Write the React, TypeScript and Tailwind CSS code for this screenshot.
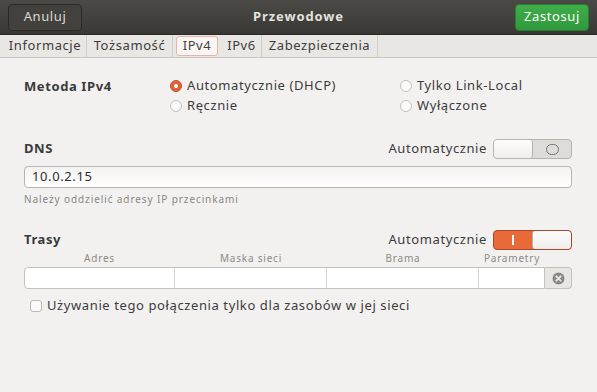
import React from "react";

function Radio({ checked, label }: { checked?: boolean; label: string }) {
  return (
    <div className="flex items-center h-[20px]">
      {checked ? (
        <span className="w-[12px] h-[12px] rounded-full bg-[#e0643a] border border-[#c4522c] flex items-center justify-center mr-[5px]">
          <span className="w-[4px] h-[4px] rounded-full bg-white" />
        </span>
      ) : (
        <span className="w-[12px] h-[12px] rounded-full bg-[#fafafa] border border-[#c2bfba] mr-[5px]" />
      )}
      <span className="text-[#3c3c3c]">{label}</span>
    </div>
  );
}

function SwitchOff() {
  return (
    <div className="w-[79px] h-[20px] rounded-[4px] border border-[#b6b3ad] bg-[#dedcd8] flex overflow-hidden">
      <div className="w-[39px] h-full bg-gradient-to-b from-[#fdfdfc] to-[#efeeec] border-r border-[#b6b3ad] rounded-[3px]" />
      <div className="flex-1 flex items-center justify-center">
        <span className="w-[13px] h-[11px] rounded-full border border-[#77746e]" />
      </div>
    </div>
  );
}

function SwitchOn() {
  return (
    <div className="w-[79px] h-[20px] rounded-[4px] border border-[#a8472a] bg-[#e96a39] flex overflow-hidden">
      <div className="flex-1 flex items-center justify-center">
        <span className="w-[2px] h-[10px] bg-white" />
      </div>
      <div className="w-[39px] h-full bg-gradient-to-b from-[#fdfdfc] to-[#efeeec] border-l border-[#b6b3ad] rounded-[3px]" />
    </div>
  );
}

export default function App() {
  return (
    <div
      className="w-[597px] h-[392px] bg-[#f2f1f0] flex flex-col text-[13px] text-[#3c3c3c] tracking-[0.6px]"
      style={{ fontFamily: '"Noto Sans", "Open Sans", sans-serif' }}
    >
      {/* Header */}
      <div className="h-[35px] bg-gradient-to-b from-[#4b4a46] to-[#393834] border-b border-[#2a2927] flex items-center justify-between px-[8px]">
        <button className="w-[74px] h-[27px] rounded-[4px] border border-[#2b2a27] bg-[#42413d] text-[#dcd9d2] text-[13px] tracking-[0.6px]">
          Anuluj
        </button>
        <div className="text-[#e4e2dd] font-bold text-[13px] tracking-[0.9px]">Przewodowe</div>
        <button className="w-[74px] h-[27px] rounded-[4px] border border-[#23812f] bg-gradient-to-b from-[#41ac4b] to-[#2f9a3b] text-white text-[13px] tracking-[0.6px]">
          Zastosuj
        </button>
      </div>

      {/* Tabs */}
      <div className="h-[23px] bg-[#e9e7e4] border-b border-[#c9c6c1] flex items-stretch pl-[4px] text-[13px]">
        <div className="w-[83px] flex items-center justify-center border-r border-[#d2cfca]">Informacje</div>
        <div className="w-[86px] flex items-center justify-center border-r border-[#d2cfca]">Tożsamość</div>
        <div className="w-[42px] ml-[3px] mr-[4px] my-[1px] flex items-center justify-center rounded-[3px] border border-[#eab3a3] bg-[#f8f7f6] text-[#4a3f3b]">IPv4</div>
        <div className="w-[40px] flex items-center justify-center border-r border-[#d2cfca]">IPv6</div>
        <div className="w-[116px] flex items-center justify-center border-r border-[#d2cfca]">Zabezpieczenia</div>
      </div>

      {/* Content */}
      <div className="flex flex-col px-[24px] pr-[25px]">
        {/* Method */}
        <div className="flex mt-[18px]">
          <div className="w-[146px] pt-[1px] font-bold text-[#3a3a3a]">Metoda IPv4</div>
          <div className="w-[230px] flex flex-col">
            <Radio checked label="Automatycznie (DHCP)" />
            <Radio label="Ręcznie" />
          </div>
          <div className="flex flex-col">
            <Radio label="Tylko Link-Local" />
            <Radio label="Wyłączone" />
          </div>
        </div>

        {/* DNS */}
        <div className="flex items-center justify-between mt-[23px] h-[20px]">
          <div className="font-bold text-[#3a3a3a]">DNS</div>
          <div className="flex items-center gap-[6px]">
            <span>Automatycznie</span>
            <SwitchOff />
          </div>
        </div>
        <div className="mt-[7px] h-[22px] rounded-[4px] border border-[#b9b6b0] bg-gradient-to-b from-[#f4f3f2] to-white flex items-center px-[7px] text-[#2e2e2e]">
          10.0.2.15
        </div>
        <div className="mt-[4px] text-[10px] text-[#8a8783] tracking-[0.9px]">Należy oddzielić adresy IP przecinkami</div>

        {/* Routes */}
        <div className="flex items-center justify-between mt-[23px] h-[20px]">
          <div className="font-bold text-[#3a3a3a]">Trasy</div>
          <div className="flex items-center gap-[6px]">
            <span>Automatycznie</span>
            <SwitchOn />
          </div>
        </div>
        <div className="flex text-[10px] text-[#8d8a86] h-[16px] items-end tracking-[0.8px]">
          <div className="w-[151px] text-center">Adres</div>
          <div className="w-[152px] text-center">Maska sieci</div>
          <div className="w-[152px] text-center">Brama</div>
          <div className="w-[66px] text-center">Parametry</div>
        </div>
        <div className="flex h-[22px] mt-[1px]">
          <div className="flex-1 flex rounded-l-[4px] border border-[#c4c1bc] bg-white">
            <div className="w-[150px] border-r border-[#d6d3cf]" />
            <div className="w-[152px] border-r border-[#d6d3cf]" />
            <div className="w-[152px] border-r border-[#d6d3cf]" />
            <div className="flex-1" />
          </div>
          <div className="w-[27px] rounded-r-[4px] border border-l-0 border-[#c4c1bc] bg-[#e8e6e3] flex items-center justify-center">
            <svg width="13" height="13" viewBox="0 0 13 13">
              <circle cx="6.5" cy="6.5" r="6" fill="#8a8885" />
              <path d="M4.3 4.3 L8.7 8.7 M8.7 4.3 L4.3 8.7" stroke="#ebe9e6" strokeWidth="1.8" strokeLinecap="round" />
            </svg>
          </div>
        </div>
        <div className="flex items-center mt-[7px] ml-[6px]">
          <span className="w-[12px] h-[12px] rounded-[3px] border border-[#bcb9b4] bg-[#fafafa] mr-[5px]" />
          <span>Używanie tego połączenia tylko dla zasobów w jej sieci</span>
        </div>
      </div>
    </div>
  );
}
